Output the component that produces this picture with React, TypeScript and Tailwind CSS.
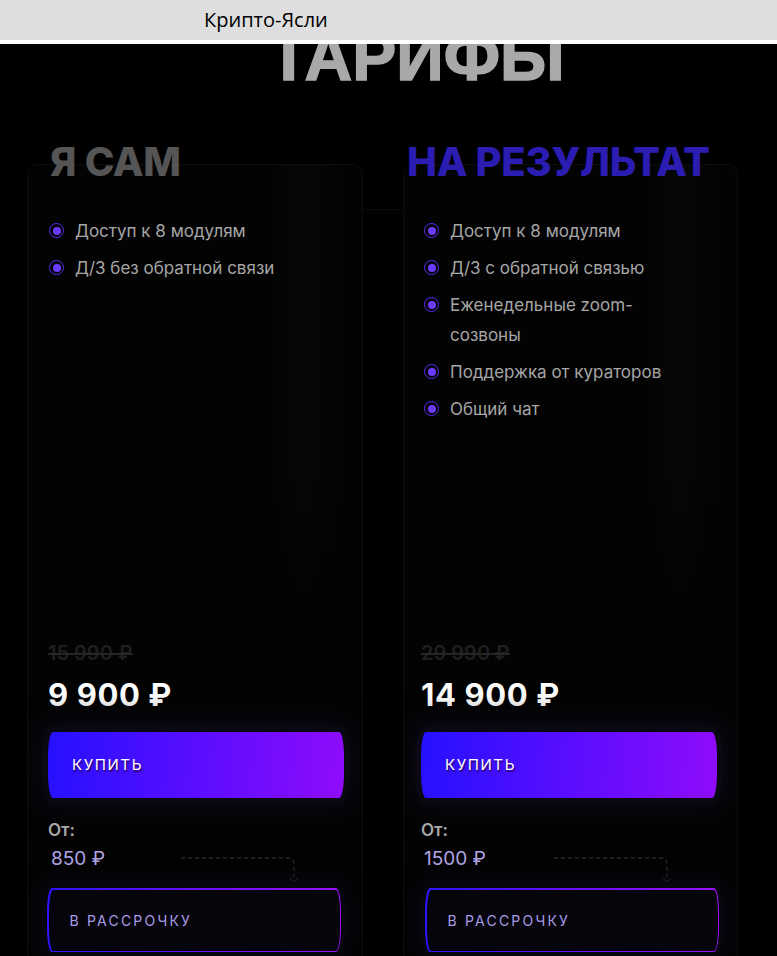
import React from "react";

type Plan = {
  title: string;
  titleColor: string;
  titleMl: string;
  pad: string;
  listPad: string;
  instMl: string;
  features: string[];
  oldPrice: string;
  price: string;
  from: string;
};

const plans: Plan[] = [
  {
    title: "Я САМ",
    titleColor: "text-[#555555]",
    titleMl: "ml-[23px]",
    pad: "px-[20px]",
    listPad: "pl-[1px]",
    instMl: "-ml-[1px]",
    features: ["Доступ к 8 модулям", "Д/З без обратной связи"],
    oldPrice: "15 990 ₽",
    price: "9 900 ₽",
    from: "850 ₽",
  },
  {
    title: "НА РЕЗУЛЬТАТ",
    titleColor: "text-[#2b1cb2]",
    titleMl: "ml-[4px]",
    pad: "px-[17px]",
    listPad: "pl-[3px]",
    instMl: "ml-[4px]",
    features: [
      "Доступ к 8 модулям",
      "Д/З с обратной связью",
      "Еженедельные zoom-созвоны",
      "Поддержка от кураторов",
      "Общий чат",
    ],
    oldPrice: "29 990 ₽",
    price: "14 900 ₽",
    from: "1500 ₽",
  },
];

function Bullet() {
  return (
    <span className="mt-[7px] flex h-[15px] w-[15px] shrink-0 items-center justify-center rounded-full border-[1.5px] border-[#5a2cf0]">
      <span className="h-[8px] w-[8px] rounded-full bg-[#6b3cff]" />
    </span>
  );
}

function DashedArrow() {
  return (
    <svg
      className="absolute left-[132px] top-[10px]"
      width="124"
      height="28"
      viewBox="0 0 124 28"
      fill="none"
    >
      <path
        d="M1 1 H108 Q114 1 114 8 V24"
        stroke="#3a3a3a"
        strokeWidth="1"
        strokeDasharray="4 3"
      />
      <path d="M110 21 L114 25 L118 21" stroke="#3a3a3a" strokeWidth="1" />
    </svg>
  );
}

function Card({ plan }: { plan: Plan }) {
  return (
    <div className="flex flex-col">
      <h2
        className={`relative z-10 ${plan.titleMl} ${plan.titleColor} whitespace-nowrap text-[40px] font-extrabold leading-[40px] tracking-[-0.3px]`}
      >
        {plan.title}
      </h2>
      <div
        className={`relative -mt-[18px] h-[820px] overflow-hidden rounded-[10px] border border-[#0d0d0d] bg-[#030303] ${plan.pad} pt-[51px]`}
      >
        <div className="pointer-events-none absolute right-[10px] top-0 h-[480px] w-[90px] bg-[linear-gradient(90deg,rgba(255,255,255,0),rgba(255,255,255,0.02),rgba(255,255,255,0))] [mask-image:linear-gradient(180deg,black,black_60%,transparent)]" />
        <ul className={`relative flex h-[425px] flex-col gap-[7px] ${plan.listPad}`}>
          {plan.features.map((f) => (
            <li key={f} className="flex items-start gap-[11px]">
              <Bullet />
              <span className="max-w-[240px] text-[17px] leading-[30px] text-[#a6a6a6]">
                {f}
              </span>
            </li>
          ))}
        </ul>
        <div className="relative text-[20px] font-semibold leading-[24px] text-[#1f1f1f] line-through decoration-[#262626] decoration-2">
          {plan.oldPrice}
        </div>
        <div className="relative mt-[12px] text-[31px] font-bold leading-[36px] tracking-[0.6px] text-white">
          {plan.price}
        </div>
        <button className="relative mt-[19px] flex h-[66px] w-[296px] items-center rounded-[5px/24px] bg-[linear-gradient(95deg,#2511ff,#5a0dff_50%,#8f0cfa)] pl-[24px] text-[15px] font-normal tracking-[1.6px] text-white shadow-[0_0_0_6px_rgba(11,9,20,0.9),0_0_24px_14px_rgba(10,8,20,0.85)] [text-shadow:1px_2px_1px_rgba(50,0,90,0.95)]">
          КУПИТЬ
        </button>
        <div className="relative mt-[20px] text-[17px] font-semibold leading-[24px] text-[#a8a8a8]">
          От:
        </div>
        <div className="relative mt-[5px] pl-[3px] text-[19px] leading-[24px] text-[#b2a6e8]">
          {plan.from}
          <DashedArrow />
        </div>
        <div
          className={`relative ${plan.instMl} mt-[17px] h-[64px] w-[294px] rounded-[5px/24px] bg-[linear-gradient(90deg,#2d14ff,#6a10ff_50%,#9a12f5)] p-[1.5px] shadow-[0_0_18px_10px_rgba(10,8,20,0.8)]`}
        >
          <div className="flex h-full w-full items-center rounded-[4px/23px] bg-[#06050b] pl-[21px] text-[14px] tracking-[2.2px] text-[#a99ce8]">
            В РАССРОЧКУ
          </div>
        </div>
      </div>
    </div>
  );
}

export default function App() {
  return (
    <div
      className="h-[956px] w-[777px] overflow-hidden bg-white"
      style={{ fontFamily: "Inter, 'Noto Sans', sans-serif" }}
    >
      <div className="flex h-[40px] items-center bg-[#dedede] pl-[204px]">
        <span
          className="text-[20px] text-black"
          style={{ fontFamily: "'Open Sans', 'Noto Sans', sans-serif" }}
        >
          Крипто-Ясли
        </span>
      </div>
      <div className="relative mt-[4px] h-[912px] overflow-hidden bg-black">
        <h1
          className="-mt-[20px] pl-[56px] text-center text-[66px] font-bold leading-[66px] text-[#a9a9a9] [-webkit-text-stroke:1.5px_#a9a9a9]"
          style={{ fontFamily: "'Liberation Sans', Arial, sans-serif", fontWeight: 700 }}
        >
          ТАРИФЫ
        </h1>
        <div className="relative mt-[52px] grid grid-cols-[336px_335px] gap-[40px] pl-[27px]">
          <div className="absolute left-[363px] top-[67px] h-px w-[40px] bg-[#0c0c0c]" />
          {plans.map((p) => (
            <Card key={p.title} plan={p} />
          ))}
        </div>
      </div>
    </div>
  );
}
